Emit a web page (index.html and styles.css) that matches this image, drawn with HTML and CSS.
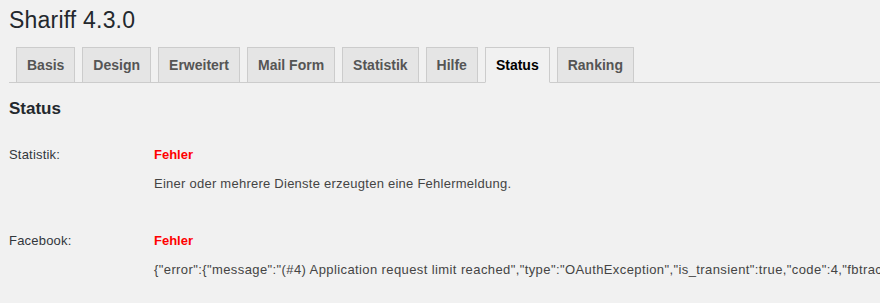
FILE: index.html
```html
<!DOCTYPE html>
<html lang="de">
<head>
    <meta charset="UTF-8">
    <title>Shariff 4.3.0</title>
    <link rel="stylesheet" href="styles.css">
</head>
<body>
    <div class="wrap">
        <h1 class="page-title">Shariff 4.3.0</h1>

        <nav class="nav-tabs">
            <a class="nav-tab" href="#">Basis</a>
            <a class="nav-tab" href="#">Design</a>
            <a class="nav-tab" href="#">Erweitert</a>
            <a class="nav-tab" href="#">Mail Form</a>
            <a class="nav-tab" href="#">Statistik</a>
            <a class="nav-tab" href="#">Hilfe</a>
            <a class="nav-tab active" href="#">Status</a>
            <a class="nav-tab" href="#">Ranking</a>
        </nav>

        <h2 class="section-title">Status</h2>

        <div class="status-table">
            <div class="status-row">
                <div class="status-label">Statistik:</div>
                <div class="status-value">
                    <div class="status-error">Fehler</div>
                    <p class="status-msg">Einer oder mehrere Dienste erzeugten eine Fehlermeldung.</p>
                </div>
            </div>
            <div class="status-row">
                <div class="status-label">Facebook:</div>
                <div class="status-value">
                    <div class="status-error">Fehler</div>
                    <p class="status-msg json">{"error":{"message":"(#4) Application request limit reached","type":"OAuthException","is_transient":true,"code":4,"fbtrace_id":"AqXz7yB3kLm"}}</p>
                </div>
            </div>
        </div>
    </div>
</body>
</html>
```

FILE: styles.css
```css
* {
    margin: 0;
    padding: 0;
    box-sizing: border-box;
}

body {
    background: #f1f1f1;
    color: #444;
    font-family: 'Liberation Sans', Arial, sans-serif;
    font-size: 13px;
    overflow: hidden;
}

.wrap {
    padding: 5px 0 0 9px;
}

.page-title {
    font-size: 23px;
    font-weight: 400;
    line-height: 30px;
    letter-spacing: 0.2px;
    color: #23282d;
}

.nav-tabs {
    display: flex;
    align-items: flex-start;
    margin-top: 12px;
    border-bottom: 1px solid #ccc;
}

.nav-tab {
    margin-left: 7px;
    margin-bottom: -1px;
    padding: 5px 10px;
    border: 1px solid #ccc;
    background: #e5e5e5;
    color: #555;
    font-size: 14px;
    font-weight: 700;
    line-height: 24px;
    text-decoration: none;
}

.nav-tab.active {
    background: #f1f1f1;
    border-bottom-color: #f1f1f1;
    color: #000;
}

.section-title {
    margin-top: 14px;
    font-size: 17px;
    font-weight: 700;
    line-height: 24px;
    color: #23282d;
}

.status-table {
    display: flex;
    flex-direction: column;
    gap: 37px;
    margin-top: 24px;
}

.status-row {
    display: grid;
    grid-template-columns: 145px 1fr;
    line-height: 20px;
}

.status-label {
    color: #32373c;
    letter-spacing: 0.2px;
}

.status-error {
    color: #f00;
    font-weight: 700;
}

.status-msg {
    margin-top: 9px;
    white-space: nowrap;
    letter-spacing: 0.25px;
}

.status-msg.json {
    letter-spacing: 0.4px;
}
```
